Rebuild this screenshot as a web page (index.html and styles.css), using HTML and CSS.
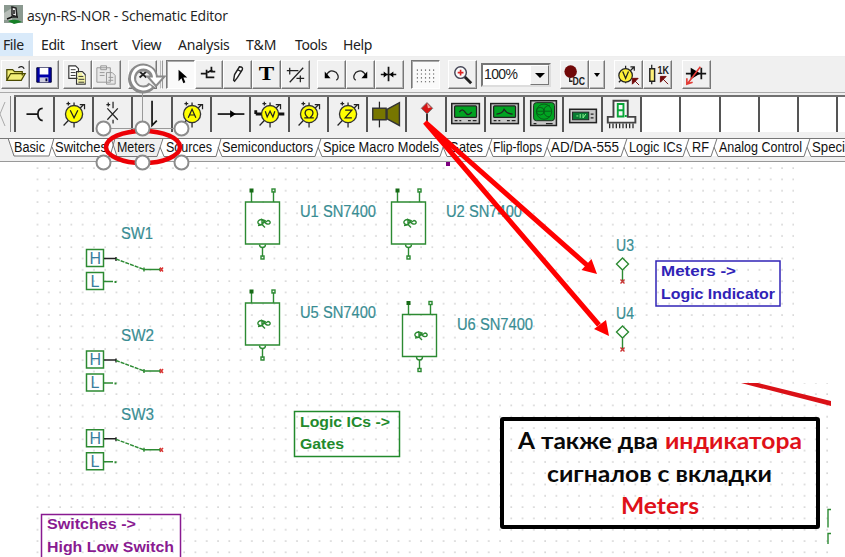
FILE: index.html
```html
<!DOCTYPE html>
<html lang="en">
<head>
<meta charset="utf-8">
<title>asyn-RS-NOR - Schematic Editor</title>
<link rel="stylesheet" href="styles.css">
</head>
<body>
<svg class="defs" aria-hidden="true">
  <defs>
    <g id="meter"><path d="M9 31L30 9M20 7v5M20 27v6M12 8h4M14 6v4" class="ink"/><path d="M26 9h5v5" class="ink"/><circle cx="20" cy="19" r="9" fill="#ff0" stroke="#333" stroke-width="1.4"/></g>
    <g id="scope"><rect x="5" y="8" width="29" height="21" fill="#c8c8c8" stroke="#222" stroke-width="1.6"/><rect x="8" y="10.500" width="23" height="12" rx="1" fill="#00a321" stroke="#222" stroke-width="1.300"/><path d="M8 26h3M13 26h2M22 26h3M27 26h4" class="ink"/></g>
    <g id="gate"><path d="M.5 .5H34.500V42.500H.5zM6.500 .5V-10M28.500 .5V-10M17.500 46V55"/><rect x="4.500" y="-13" width="4" height="4" fill="#176b17" stroke="none"/><rect x="27" y="-12.500" width="3" height="3"/><rect x="16" y="54.500" width="3" height="3" /><path d="M14.500 43a3 3 0 0 0 6 0"/><path d="M17 18c-6 0-5 6 0 5l3-4-3-1v5l3 3M20 21l3-2c4 1 2 5-2 3l-3-2M13 24l5-1"/></g>
    <g id="switch"><path d="M86.500 249.500h17v17h-17zM86.500 272.500h17v17h-17z" stroke-width="1.500"/><path d="M104 281.500h9M143 269.500h17M144 267.500v4M160 268v3"/><path d="M104 258.500h12M116 257v4" stroke="#222"/><path d="M116 259l28 10.500" stroke-dasharray="4 1"/><path d="M115.500 281v2" stroke-width="2"/><path d="M160 267.500l3 4M163 267.500l-3 4" stroke="#d33"/></g>
    <g id="probe"><path d="M0-6L6 0 0 6-6 0zM0 6v12" /><path d="M-2 15.500l4 4M2 15.500l-4 4" stroke="#c33"/></g>
    <pattern id="grid" x="31.800" y="162.400" width="11.280" height="11.300" patternUnits="userSpaceOnUse"><rect x="5" y="5" width="1.500" height="1.500" fill="#ccc"/></pattern>
  </defs>
</svg>
<main class="window">
  <header class="titlebar">
    <svg class="appicon" viewBox="0 0 20 20"><rect width="19" height="18" fill="#8b9990"/><path d="M0 8L8 3v12H0z" fill="#b8beb9"/><path d="M8 2l4 1 1 9-5-2zM7 12h7" fill="#eee" stroke="#222" stroke-width="1.500"/><path d="M10 5v4M3 14l5-2" stroke="#111" stroke-width="1.500"/><path d="M4 16q8-3 14 1l-8 2z" fill="#168027"/></svg>
    <svg class="caption" viewBox="0 0 210 32"><text x="0" y="21" textLength="201">asyn-RS-NOR - Schematic Editor</text></svg>
  </header>
  <nav class="menubar">
    <span class="m file">File</span><span class="m edit">Edit</span><span class="m insert">Insert</span><span class="m view">View</span><span class="m analysis">Analysis</span><span class="m tm">T&amp;M</span><span class="m tools">Tools</span><span class="m help">Help</span>
  </nav>
  <section class="toolbar">
    <div class="group g1">
      <svg class="btn" viewBox="0 0 28 28"><path d="M5 20V9h6l2 2h8v4M5 20l4-7h15l-4 7z" fill="#f3ef78" stroke="#4b4a00" stroke-width="1.300"/><path d="M17 7q4-3 6 1" class="ink"/></svg>
      <svg class="btn" viewBox="0 0 28 28"><path d="M6 7h15v15H6z" fill="#00a" stroke="#003"/><path d="M9 7h9v7H9z" fill="#fff"/><path d="M9 17h9v5H9z" fill="#ccd"/><path d="M15 18h2v3h-2z" fill="#003"/></svg>
    </div>
    <div class="group g2">
      <svg class="btn" viewBox="0 0 28 28"><path d="M5 5h7l3 3v10H5zM13 11h6l3 3v10h-9z" fill="#fff" stroke="#333" stroke-width="1.200"/><path d="M7 9h5M7 12h5M7 15h5" stroke="#333"/><path d="M14 12h5v3h3v8h-8z" fill="#f4f3a4"/><path d="M15 16h5M15 19h6M15 22h6" stroke="#333"/></svg>
      <svg class="btn" viewBox="0 0 28 28"><g fill="#e8e8e8" stroke="#999"><path d="M4 7h14v15H4zM8 5h6v4H8zM14 12h6l3 3v9h-9z"/><path d="M7 12h5M7 15h5M16 17h5M16 20h5"/></g></svg>
    </div>
    <div class="group g3"><svg class="btn" viewBox="0 0 28 28"><path d="M11 11l7 6M18 11l-7 6" stroke="#222" stroke-width="2"/></svg></div>
    <i class="rule"></i>
    <div class="group g4">
      <svg class="btn pressed" viewBox="0 0 28 28"><path d="M12 9v12l3-3 2 5 2-1-2-5h4z" fill="#000"/></svg>
      <svg class="btn" viewBox="0 0 27 28"><path d="M5 13h6M11 9v9M12 12l5-3M11 17h8M16 6v5h4" class="ink2"/></svg>
      <svg class="btn" viewBox="0 0 28 28"><path d="M10 20l1-6 5-8q4 0 3 3l-5 8-3 4z" fill="#fff" stroke="#222" stroke-width="1.500"/><path d="M14 9l4 2" class="ink"/></svg>
      <svg class="btn" viewBox="0 0 28 28"><text x="6" y="20" textLength="16" lengthAdjust="spacingAndGlyphs" class="tool-t">T</text></svg>
      <svg class="btn" viewBox="0 0 28 28"><path d="M5 10h7M8 7v7M8 22L22 7M15 18h8M19 15v7M12 10h5" class="ink"/></svg>
    </div>
    <div class="group g5">
      <svg class="btn" viewBox="0 0 28 28"><path d="M8 16q4-9 11-4 4 5 0 8" class="ink"/><path d="M7 11v7h6z"/></svg>
      <svg class="btn" viewBox="0 0 28 28"><path d="M20 16q-4-9-11-4-4 5 0 8" class="ink"/><path d="M21 11v7h-6z"/></svg>
      <svg class="btn" viewBox="0 0 28 28"><path d="M5 14h16M13 6v15" class="ink2"/><path d="M8 11l4 3-4 3zM18 11l-4 3 4 3z"/></svg>
    </div>
    <div class="group g6"><svg class="btn pressed" viewBox="0 0 28 28"><path d="M5 9.500h19M5 13.500h19M5 17.500h19M5 21.500h19" stroke="#555" stroke-width="1.200" stroke-dasharray="1.200 3"/></svg></div>
    <div class="group g7"><svg class="btn" viewBox="0 0 28 28"><path d="M16 16l7 7" stroke="#222" stroke-width="3"/><circle cx="12" cy="12" r="6" fill="#f8fafa" stroke="#445" stroke-width="1.500"/><path d="M9 12h6M12 9v6" stroke="#d22" stroke-width="1.700"/></svg></div>
    <div class="combo"><span>100%</span><i class="drop"></i></div>
    <div class="group g8"><svg class="btn" viewBox="0 0 28 28"><circle cx="10" cy="11" r="6.500" fill="#710909"/><path d="M9 17v4h3" class="ink"/><text x="12" y="25" textLength="13" lengthAdjust="spacingAndGlyphs" class="dc">DC</text></svg><span class="btn slim"><i class="arrow"></i></span></div>
    <div class="group g9">
      <svg class="btn" viewBox="0 0 28 28"><path d="M4 22L20 6M11 5v18M16 6h4v4" class="ink"/><circle cx="11" cy="15" r="7" fill="#ffef38" stroke="#222" stroke-width="1.300"/><path d="M8 11l3 7 3-7" class="ink"/><path d="M18 18h6l-6 6zM19 19l6 6" fill="#710909" stroke="#710909"/></svg>
      <svg class="btn" viewBox="0 0 28 28"><path d="M8 4v20" class="ink"/><path d="M6 8h5v13H6z" fill="#fff078" stroke="#222" stroke-width="1.500"/><text x="14" y="13" textLength="12" lengthAdjust="spacingAndGlyphs" class="onek">1K</text><path d="M17 16h6l-6 6zM18 17l7 7" fill="#710909" stroke="#710909"/></svg>
    </div>
    <div class="group g10"><svg class="btn" viewBox="0 0 28 28"><path d="M3 13h21M19 7v12" class="ink2"/><path d="M8 7v12l10-6z"/><path d="M18 6L5 23M4 18v6l6-2" fill="none" stroke="#e23b35" stroke-width="1.700"/></svg></div>
  </section>
  <section class="palette">
    <svg class="scroll" viewBox="0 0 12 36"><path d="M5 6L0 18l5 12" fill="none" stroke="#aaa"/><path d="M10.500 0v36" stroke="#888"/></svg>
    <div class="cells">
      <svg viewBox="0 2 39 36"><path d="M11 19h12M28 13q-5 0-5 6t5 7" class="ink2"/></svg>
      <svg viewBox="0 2 39 36"><use href="#meter"/><path d="M16 15l4 8 4-8" class="ink"/></svg>
      <svg viewBox="0 2 39 36"><path d="M20 6v7M14 13l11 12M25 13L14 25M13 9h4M15 7v4M20 25v4" class="ink"/></svg>
      <svg viewBox="0 2 39 36"><path d="M20 5v26l5-5" class="ink2"/></svg>
      <svg viewBox="0 2 39 36"><use href="#meter"/><path d="M16 23l4-9 4 9M17.500 20h5" class="ink"/></svg>
      <svg viewBox="0 2 39 36"><path d="M6 19h28" class="ink2"/><path d="M19 15l6 4-6 4z"/></svg>
      <svg viewBox="0 2 39 36"><path d="M5 19h30M5 15v4" stroke="#111" stroke-width="3"/><use href="#meter"/><path d="M15 16l2 6 3-6 3 6 2-6" class="ink"/></svg>
      <svg viewBox="0 2 39 36"><use href="#meter"/><path d="M15 23h4q-5-4-2-8 3-2 6 0 3 4-2 8h4" class="ink"/></svg>
      <svg viewBox="0 2 39 36"><use href="#meter"/><path d="M17 15h7l-7 8h7" class="ink"/></svg>
      <svg viewBox="0 2 39 36"><path d="M12 6v27" class="ink"/><path d="M5 13h14v12H5zM20 14l13-7v24l-13-7z" fill="#777600" stroke="#333" stroke-width="1.500"/></svg>
      <svg viewBox="0 2 39 36"><path d="M21 17v12" class="ink2"/><path d="M21 7l6 6-6 6-6-6z" fill="#d51515" stroke="#777"/><path d="M21 8l4 4-3 1z" fill="#f6aaa4"/></svg>
      <svg viewBox="0 2 39 36"><use href="#scope"/><path d="M13 17q3-5 6 0t7 0" class="ink"/></svg>
      <svg viewBox="0 2 39 36"><use href="#scope"/><path d="M11 19q6 0 8-5 3 5 9 5" class="ink"/></svg>
      <svg viewBox="0 2 39 36"><path d="M6 5h27v26H6z" fill="#c8c8c8" stroke="#222" stroke-width="1.600"/><rect x="9" y="7" width="22" height="19" rx="3" fill="#00a321" stroke="#222"/><g fill="none" stroke="#075c18"><circle cx="20" cy="16.500" r="8"/><path d="M12 16h16M26 10q-6 0-6 6 0 6 6 6"/><circle cx="16" cy="16" r="4"/></g><path d="M9 29h3M22 29h7" class="ink"/></svg>
      <svg viewBox="0 2 39 36"><rect x="6" y="14" width="28" height="14" fill="#c8c8c8" stroke="#222" stroke-width="1.600"/><rect x="9" y="17" width="17" height="8" fill="#087b32" stroke="#222"/><path d="M13 21h2M17 19v4M20 19v4l3-4" fill="none" stroke="#9f9"/><path d="M28 19h3M28 23h3" class="ink"/></svg>
      <svg viewBox="0 2 39 36"><path d="M11 22V5h15v17h8v6H5v-6z" fill="#f8f8f8" stroke="#444" stroke-width="2"/><path d="M7 29v5M10.500 29v5M14 29v5M17.500 29v5M21 29v5M24.500 29v5M28 29v5M31.500 29v5" class="ink"/><path d="M15.500 8.500h6v13h-6zM15.500 15h6M24 20v2" fill="none" stroke="#08a637" stroke-width="2"/></svg>
      <i class="empty"></i><i class="empty"></i><i class="empty"></i><i class="empty"></i><i class="empty"></i><i class="empty"></i>
    </div>
  </section>
  <nav class="tabs">
    <svg viewBox="0 137 845 24">
      <path d="M8 138H845V156H16z" fill="#fff"/>
      <path d="M112 138h50l-5 18h-40z" fill="#f0f0f0"/>
      <path class="tabline" d="M0 138.500H845M8 138l6 18H49l5-18M52 147l4 9.500h54l5-18M111 138l6 18.500h40l6-18M160 147l4 9.500h52l5-18M218 147l4 9.500h93l6-18M318 147l4 9.500h118l6-18M443 147l4 9.500h39l6-18M489 147l4 9.500h51l6-18M547 147l4 9.500h70l6-18M624 147l4 9.500h55l6-18M686 147l4 9.500h21l6-18M714 147l4 9.500h86l6-18M807 147l4 9.500h34"/>
      <g class="tabtext">
        <text x="14" y="152" textLength="31" lengthAdjust="spacingAndGlyphs">Basic</text>
        <text x="55" y="152" textLength="52" lengthAdjust="spacingAndGlyphs">Switches</text>
        <text x="117" y="152" textLength="38" lengthAdjust="spacingAndGlyphs">Meters</text>
        <text x="166" y="152" textLength="46" lengthAdjust="spacingAndGlyphs">Sources</text>
        <text x="222" y="152" textLength="91" lengthAdjust="spacingAndGlyphs">Semiconductors</text>
        <text x="323" y="152" textLength="116" lengthAdjust="spacingAndGlyphs">Spice Macro Models</text>
        <text x="449" y="152" textLength="34" lengthAdjust="spacingAndGlyphs">Gates</text>
        <text x="493" y="152" textLength="49" lengthAdjust="spacingAndGlyphs">Flip-flops</text>
        <text x="551" y="152" textLength="68" lengthAdjust="spacingAndGlyphs">AD/DA-555</text>
        <text x="629" y="152" textLength="53" lengthAdjust="spacingAndGlyphs">Logic ICs</text>
        <text x="692" y="152" textLength="17" lengthAdjust="spacingAndGlyphs">RF</text>
        <text x="719" y="152" textLength="83" lengthAdjust="spacingAndGlyphs">Analog Control</text>
        <text x="812" y="152" textLength="33" lengthAdjust="spacingAndGlyphs">Speci</text>
      </g>
    </svg>
  </nav>
  <section class="canvas">
    <svg viewBox="0 162 845 395">
      <path d="M34 163H794V383H831V557H34z" fill="url(#grid)"/>
      <g class="part"><use href="#gate" x="245" y="201.500"/><use href="#gate" x="391" y="201.500"/><use href="#gate" x="245" y="302.500"/><use href="#gate" x="402" y="314"/>
      <use href="#switch"/><use href="#switch" y="101.500"/><use href="#switch" y="180.300"/><use href="#probe" x="622.500" y="264"/><use href="#probe" x="622.500" y="332"/>
      <path d="M831 509.500h-3v18M831 533.500h-3v10.500"/></g>
      <g class="hl">
        <text x="89.500" y="263.500">H</text><text x="90.500" y="286.500">L</text><text x="89.500" y="365">H</text><text x="90.500" y="388">L</text><text x="89.500" y="444">H</text><text x="90.500" y="467">L</text>
      </g>
      <g class="label">
        <text x="121" y="239" textLength="32" lengthAdjust="spacingAndGlyphs">SW1</text><text x="121" y="341" textLength="33" lengthAdjust="spacingAndGlyphs">SW2</text><text x="121" y="419.500" textLength="33" lengthAdjust="spacingAndGlyphs">SW3</text>
        <text x="300" y="217" textLength="76" lengthAdjust="spacingAndGlyphs">U1 SN7400</text><text x="446" y="217" textLength="76" lengthAdjust="spacingAndGlyphs">U2 SN7400</text>
        <text x="300" y="318" textLength="76" lengthAdjust="spacingAndGlyphs">U5 SN7400</text><text x="457" y="329.500" textLength="76" lengthAdjust="spacingAndGlyphs">U6 SN7400</text>
        <text x="616" y="250.500" textLength="18" lengthAdjust="spacingAndGlyphs">U3</text><text x="616" y="318.500" textLength="18" lengthAdjust="spacingAndGlyphs">U4</text>
      </g>
      <g class="note blue"><rect x="656" y="261" width="124" height="45"/><text x="661" y="276" textLength="75" lengthAdjust="spacingAndGlyphs">Meters -&gt;</text><text x="661" y="298.500" textLength="114" lengthAdjust="spacingAndGlyphs">Logic Indicator</text></g>
      <g class="note green"><rect x="294.500" y="411.500" width="105" height="45"/><text x="300" y="426.500" textLength="90" lengthAdjust="spacingAndGlyphs">Logic ICs -&gt;</text><text x="300" y="449" textLength="44" lengthAdjust="spacingAndGlyphs">Gates</text></g>
      <g class="note purple"><rect x="41.500" y="514.500" width="139" height="46"/><text x="47" y="529" textLength="89" lengthAdjust="spacingAndGlyphs">Switches -&gt;</text><text x="47" y="551.500" textLength="127" lengthAdjust="spacingAndGlyphs">High Low Switch</text></g>
      <path d="M446 162h4v4h-4z" fill="#7d0080"/>
      <path d="M741 383h17l73 18v5z" fill="#da1117"/>
      <rect x="502" y="419" width="316" height="108" rx="1" fill="none" stroke="#000" stroke-width="4"/>
      <g class="callout">
        <text x="518" y="449" textLength="140" lengthAdjust="spacingAndGlyphs">А также два</text><text x="665" y="449" textLength="137" lengthAdjust="spacingAndGlyphs" class="red">индикатора</text>
        <text x="547" y="482" textLength="225" lengthAdjust="spacingAndGlyphs">сигналов с вкладки</text>
        <text x="621" y="513.500" textLength="78" lengthAdjust="spacingAndGlyphs" class="red">Meters</text>
      </g>
    </svg>
  </section>
  <svg class="annotations" viewBox="0 0 845 557">
    <path d="M425 122L588 266M425 122L599 325" stroke="#f00" stroke-width="5"/>
    <path d="M597 274l-15.500-4 10-11zM609 336l-15-7 12-9z" fill="#f00"/>
    <ellipse cx="143" cy="147" rx="37" ry="16" fill="none" stroke="#ec0006" stroke-width="4.500"/>
    <path d="M142.500 90v38M103 128.500h78" stroke="#999" fill="none"/>
    <path d="M152 85a11 11 0 1 1 2-8" fill="none" stroke="#8a8a8a" stroke-width="8"/>
    <path d="M147.500 76.500h17l-8.500 9.500z" fill="#fff" stroke="#8a8a8a" stroke-width="2"/>
    <path d="M151 86a11 11 0 1 1 3.500-8" fill="none" stroke="#fff" stroke-width="3"/>
    <g fill="#fff" stroke="#8c8c8c" stroke-width="2"><circle cx="103.500" cy="128.500" r="7"/><circle cx="142.500" cy="128.500" r="7"/><circle cx="181.500" cy="128.500" r="7"/><circle cx="103.500" cy="162.500" r="7"/><circle cx="142.500" cy="162.500" r="7"/><circle cx="181.500" cy="162.500" r="7"/></g>
  </svg>
</main>
</body>
</html>
```
FILE: styles.css
```css
* { box-sizing: border-box; }
body { margin: 0; background: #fff; font-family: "Open Sans", "Noto Sans", sans-serif; color: #222; }
.defs { position: absolute; width: 0; height: 0; }
.window { width: 845px; height: 557px; overflow: hidden; position: relative; display: flex; flex-direction: column; }
svg { display: block; flex: none; }
.ink { fill: none; stroke: #222; stroke-width: 1.3; }
.ink2 { fill: none; stroke: #151515; stroke-width: 1.8; }
.titlebar { height: 33px; display: flex; padding-left: 4px; flex: none; }
.appicon { width: 20px; height: 20px; margin-top: 5px; }
.caption { width: 210px; height: 32px; margin-left: 3px; font-size: 14px; fill: #222; }
.menubar { display: flex; height: 23px; flex: none; font: 14px/23px "Noto Sans", sans-serif; letter-spacing: -.4px; }
.m { white-space: nowrap; flex: none; }
.file { width: 33px; padding-left: 3px; background: #d9eafa; }
.edit { width: 48px; padding-left: 8px; }
.insert { width: 51px; }
.view { width: 46px; }
.analysis { width: 68px; letter-spacing: -.2px; }
.tm { width: 49px; letter-spacing: 0; }
.tools { width: 48px; }
.toolbar { height: 36px; flex: none; background: #f0f0f0; display: flex; align-items: flex-start; padding: 3px 0 0 1px; border-top: 1px solid #eee; }
.group { display: flex; height: 29px; flex: none; }
.btn { width: 29px; height: 29px; border: 1px solid; border-color: #fff #777 #777 #fff; box-shadow: inset -1px -1px #b5b5b5; flex: none; background: #f0f0f0; }
.pressed { background: #fafafa; border-color: #777 #fff #fff #777; box-shadow: inset 1px 1px #aaa; }
.g2 { margin-left: 4px; }
.g3 { margin-left: 7px; }
.rule { width: 3px; height: 29px; margin: 0 3px 0 3px; border: 1px solid; border-color: #fff #999 #fff #bbb; }
.g4 .btn:nth-child(2) { width: 28px; }
.g5 { margin-left: 7px; }
.g6 { margin-left: 7px; }
.g7 { margin-left: 8px; }
.tool-t { font: bold 20px "Liberation Serif", serif; }
.combo { width: 70px; height: 24px; margin: 3px 0 0 4px; border: 2px solid; border-color: #777 #ddd #ddd #777; background: #fff; display: flex; font: 14px/18px "Liberation Sans", sans-serif; }
.combo span { width: 47px; padding-left: 1px; letter-spacing: -.6px; }
.drop { width: 19px; height: 20px; border: 1px solid; border-color: #fff #777 #777 #fff; background: #f0f0f0; display: flex; align-items: center; justify-content: center; }
.drop::after, .arrow { content: ""; border: 5px solid transparent; border-top-color: #000; border-bottom: 0; }
.g8 { margin-left: 9px; }
.dc, .onek { font: bold 12px "Liberation Sans", sans-serif; fill: #222; }
.slim { width: 16px; display: flex; align-items: center; justify-content: center; }
.arrow { border-width: 4px 3px 0; }
.g9 { margin-left: 9px; }
.g10 { margin-left: 10px; }
.palette { height: 45px; flex: none; background: #f0f0f0; display: flex; padding-top: 2px; border-top: 1px solid #aaa; }
.scroll { width: 12px; height: 36px; margin-top: 1px; }
.cells { display: grid; grid-template-columns: repeat(22, 39.15px); margin-left: 2px; height: 37px; border-top: 2px solid #707070; width: 831px; overflow: hidden; flex: none; }
.cells > * { width: 39.15px; height: 36px; border-left: 2px solid #555; }
.empty { background: #fff; }
.tabs { height: 24px; flex: none; background: #f0f0f0; }
.tabs svg { width: 845px; height: 24px; }
.tabline { fill: none; stroke: #777; }
.tabtext { font: 14px "Liberation Sans", sans-serif; fill: #111; }
.canvas { height: 396px; flex: none; border-top: 1px solid #999; }
.canvas svg { width: 845px; height: 395px; }
.part { fill: none; stroke: #2c8a32; stroke-width: 1.4; }
.hl { font: 16px "Liberation Sans", sans-serif; fill: #397e9e; }
.label { font: 16px "Liberation Sans", sans-serif; fill: #398d93; stroke: #398d93; stroke-width: .2; }
.note { font: bold 15.5px "Liberation Sans", sans-serif; }
.note rect { fill: none; stroke: currentColor; stroke-width: 1.5; }
.note text { fill: currentColor; }
.blue { color: #3023b7; }
.green { color: #228a2c; }
.purple { color: #891a91; }
.callout { font: bold 23px Lato, "Open Sans", sans-serif; fill: #090909; }
.callout .red { fill: #df1119; }
.annotations { position: absolute; inset: 0; width: 845px; height: 557px; pointer-events: none; }
```
